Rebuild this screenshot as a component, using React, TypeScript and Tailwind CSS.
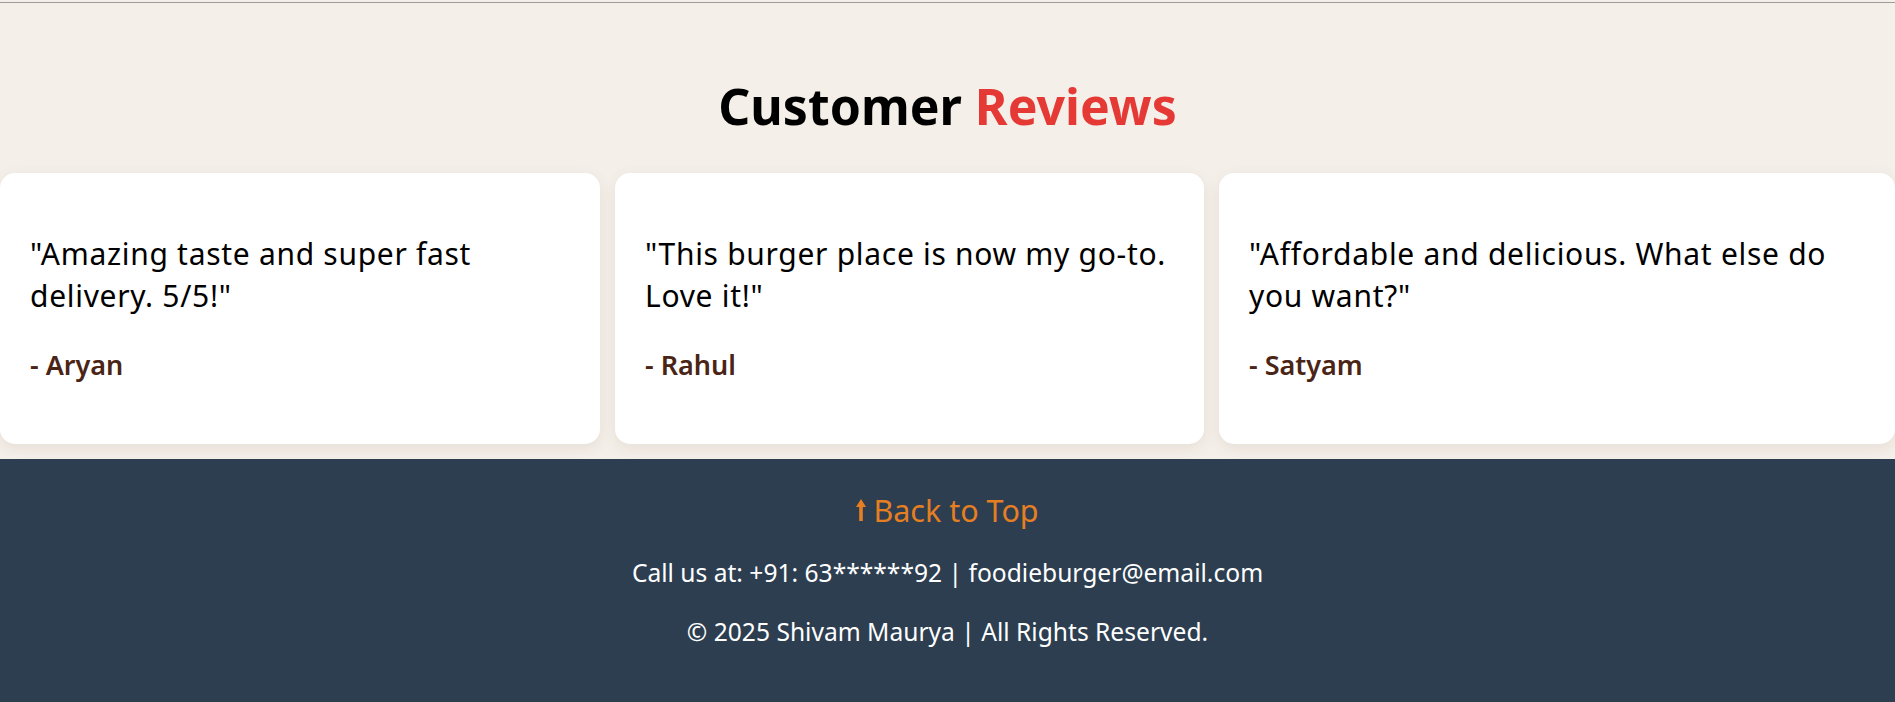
import React from "react";

const reviews = [
  { text: '"Amazing taste and super fast delivery. 5/5!"', name: "- Aryan" },
  { text: '"This burger place is now my go-to. Love it!"', name: "- Rahul" },
  { text: '"Affordable and delicious. What else do you want?"', name: "- Satyam" },
];

function UpArrow() {
  return (
    <svg width="10" height="22" viewBox="0 0 10 22" className="inline-block">
      <path d="M5 0 L10 8 L6.8 8 L6.8 22 L3.2 22 L3.2 8 L0 8 Z" fill="#e67e22" />
    </svg>
  );
}

export default function App() {
  return (
    <div className="min-h-screen bg-[#f4efe9] pt-[2px] font-['Noto_Sans',sans-serif]">
      {/* Reviews Section */}
      <section className="border-t border-[#9c9c9c] pt-[73px] pb-[15px]">
        <h2 className="text-center text-[50px] leading-[60px] font-bold text-black mb-[37px]">
          Customer <span className="text-[#e53935]">Reviews</span>
        </h2>

        <div className="grid grid-cols-[600px_589px_1fr] gap-[15px]">
          {reviews.map((review, index) => (
            <div
              key={index}
              className="h-[271px] bg-white rounded-[15px] shadow-[0_4px_14px_rgba(120,90,60,0.10)] pl-[30px] pr-[22px] pt-[60px]"
            >
              <p className="text-[30px] leading-[42px] tracking-[0.7px] text-black">{review.text}</p>
              <p className="mt-[30px] text-[27px] leading-[36px] font-semibold text-[#4a2515]">
                {review.name}
              </p>
            </div>
          ))}
        </div>
      </section>

      {/* Footer */}
      <footer className="bg-[#2c3e50] text-white text-center pt-[31px] pb-[53px]">
        <a href="#" className="inline-flex items-center gap-[7px] text-[30.5px] leading-[40px] text-[#e67e22]">
          <UpArrow />
          Back to Top
        </a>
        <p className="mt-[26px] text-[24.6px] leading-[34px]">
          Call us at: +91: 63******92 | foodieburger@email.com
        </p>
        <p className="mt-[25px] text-[24.6px] leading-[34px]">
          © 2025 Shivam Maurya | All Rights Reserved.
        </p>
      </footer>
    </div>
  );
}
